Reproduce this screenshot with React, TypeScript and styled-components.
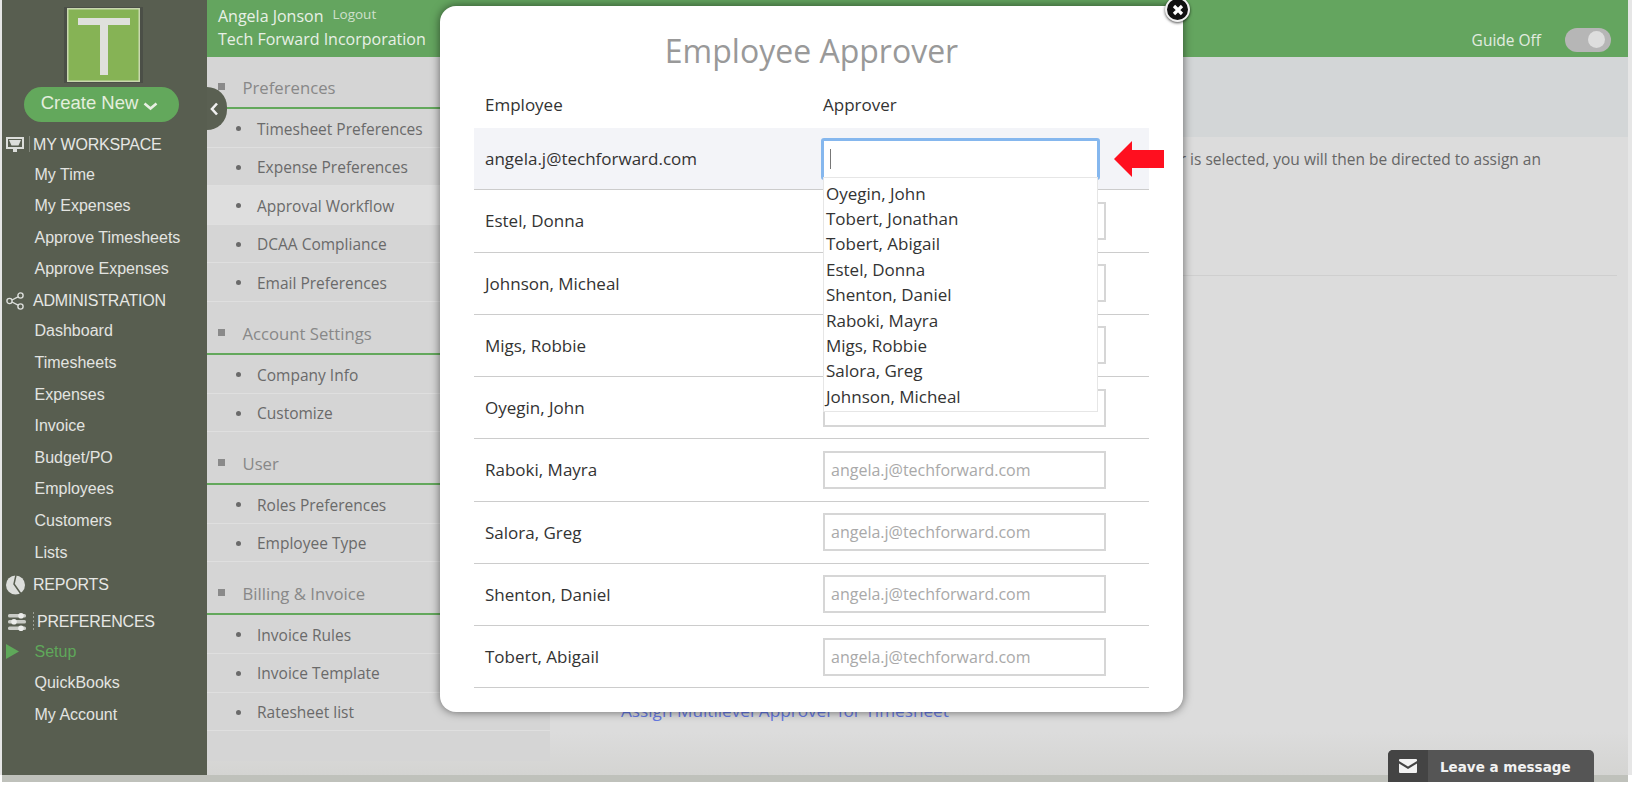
import styled, { createGlobalStyle } from "styled-components";

const GlobalStyle = createGlobalStyle`
    html, body {
        margin: 0;
        padding: 0;
        background: #fff;
        overflow: hidden;
    }
    * { box-sizing: border-box; }
`;

const workspace = ["My Time", "My Expenses", "Approve Timesheets", "Approve Expenses"];
const administration = ["Dashboard", "Timesheets", "Expenses", "Invoice", "Budget/PO", "Employees", "Customers", "Lists"];
const sections = [
    { title: "Preferences", items: ["Timesheet Preferences", "Expense Preferences", "Approval Workflow", "DCAA Compliance", "Email Preferences"] },
    { title: "Account Settings", items: ["Company Info", "Customize"] },
    { title: "User", items: ["Roles Preferences", "Employee Type"] },
    { title: "Billing & Invoice", items: ["Invoice Rules", "Invoice Template", "Ratesheet list"] },
];
const employees = ["Estel, Donna", "Johnson, Micheal", "Migs, Robbie", "Oyegin, John", "Raboki, Mayra", "Salora, Greg", "Shenton, Daniel", "Tobert, Abigail"];
const suggestions = ["Oyegin, John", "Tobert, Jonathan", "Tobert, Abigail", "Estel, Donna", "Shenton, Daniel", "Raboki, Mayra", "Migs, Robbie", "Salora, Greg", "Johnson, Micheal"];

const App = () => {
    return (
        <Page>
            <GlobalStyle />
            <Shell>
                <Sidebar>
                    <LogoBox>
                        <svg width="79" height="76" viewBox="0 0 79 76">
                            <rect width="79" height="76" fill="#4b4f47" />
                            <rect x="3" y="1" width="73" height="74" fill="#c9d8ae" />
                            <rect x="4.5" y="2.5" width="70" height="71" fill="#86b355" />
                            <rect x="14" y="11" width="52" height="7" fill="#dfe0dc" />
                            <rect x="36" y="18" width="8" height="50" fill="#dfe0dc" />
                        </svg>
                    </LogoBox>
                    <CreateButton>
                        Create New
                        <svg width="15" height="9" viewBox="0 0 15 9">
                            <path d="M1.5 1.5 L7.5 6.5 L13.5 1.5" fill="none" stroke="#e8efe3" strokeWidth="2.6" />
                        </svg>
                    </CreateButton>
                    <SideHead>
                        <svg width="24" height="18" viewBox="0 0 24 18">
                            <path d="M0 1h18v12H0z M2 3v8h14V3z" fill="#dcdedb" fillRule="evenodd" />
                            <path d="M3 4h12l-2.5 5.5h-7z" fill="#dcdedb" />
                            <rect x="7" y="13" width="4" height="3" fill="#dcdedb" />
                            <rect x="23" y="0" width="1" height="16" fill="#82877c" />
                        </svg>
                        <span>MY WORKSPACE</span>
                    </SideHead>
                    {workspace.map((item) => <SideLink key={item}>{item}</SideLink>)}
                    <SideHead>
                        <svg width="24" height="18" viewBox="0 0 24 18">
                            <g fill="none" stroke="#dcdedb" strokeWidth="1.4">
                                <circle cx="3.5" cy="9" r="2.6" />
                                <circle cx="14.5" cy="3.5" r="2.6" />
                                <circle cx="14.5" cy="14.5" r="2.6" />
                                <path d="M6 8l6-3.2M6 10l6 3.2" />
                            </g>
                        </svg>
                        <span>ADMINISTRATION</span>
                    </SideHead>
                    {administration.map((item) => <SideLink key={item}>{item}</SideLink>)}
                    <SideHead>
                        <svg width="24" height="20" viewBox="0 0 24 20">
                            <circle cx="9.5" cy="10" r="9.5" fill="#dcdedb" />
                            <path d="M10 0 L8 9 L15 19" fill="none" stroke="#585e50" strokeWidth="1.5" />
                        </svg>
                        <span>REPORTS</span>
                    </SideHead>
                    <PreferencesHead>
                        <svg width="27" height="20" viewBox="0 0 27 20">
                            <g fill="#c9cbc6">
                                <rect x="0" y="2" width="18" height="3.4" rx="1.5" />
                                <rect x="0" y="8" width="18" height="3.4" rx="1.5" />
                                <rect x="0" y="14.5" width="18" height="3.4" rx="1.5" />
                            </g>
                            <g fill="#ecedeb">
                                <circle cx="13" cy="3.7" r="2.8" />
                                <circle cx="6" cy="9.7" r="2.8" />
                                <circle cx="13" cy="16.2" r="2.8" />
                            </g>
                            <path d="M25.5 0v20" stroke="#9a9e94" strokeWidth="1" strokeDasharray="2 2" />
                        </svg>
                        <span>PREFERENCES</span>
                    </PreferencesHead>
                    <SideLink $active>
                        <ActiveMark width="13" height="15" viewBox="0 0 13 15">
                            <path d="M0 0 L13 7.5 L0 15z" fill="#5fa85a" />
                        </ActiveMark>
                        Setup
                    </SideLink>
                    <SideLink>QuickBooks</SideLink>
                    <SideLink>My Account</SideLink>
                </Sidebar>
                <Content>
                    <TopBar>
                        <UserBlock>
                            <UserLine>
                                <span>Angela Jonson</span>
                                <Logout>Logout</Logout>
                            </UserLine>
                            <span>Tech Forward Incorporation</span>
                        </UserBlock>
                        <GuideBlock>
                            <span>Guide Off</span>
                            <Toggle />
                        </GuideBlock>
                    </TopBar>
                    <Body>
                        <SubNav>
                            <CollapseTab>
                                <svg width="9" height="14" viewBox="0 0 9 14">
                                    <path d="M7 1.5 L2 7 L7 12.5" fill="none" stroke="#f0f0f0" strokeWidth="2.6" />
                                </svg>
                            </CollapseTab>
                            {sections.map((section) => (
                                <section key={section.title}>
                                    <NavTitle>{section.title}</NavTitle>
                                    {section.items.map((item) => (
                                        <NavItem key={item} $active={item === "Approval Workflow"}>{item}</NavItem>
                                    ))}
                                </section>
                            ))}
                        </SubNav>
                        <Main>
                            <Band />
                            <Notice>Once an approver is selected, you will then be directed to assign an</Notice>
                            <Divider />
                            <AssignLink>Assign Multilevel Approver for Timesheet</AssignLink>
                        </Main>
                    </Body>
                </Content>
            </Shell>
            <BottomStrip />

            <Modal>
                <CloseButton>
                    <svg width="12" height="12" viewBox="0 0 12 12">
                        <path d="M2 2 L10 10 M10 2 L2 10" stroke="#fff" strokeWidth="3.2" />
                    </svg>
                </CloseButton>
                <ModalTitle>Employee Approver</ModalTitle>
                <TableHead>
                    <span>Employee</span>
                    <span>Approver</span>
                </TableHead>
                <TableRow $highlight>
                    <span>angela.j@techforward.com</span>
                    <FocusWrap>
                        <FocusInput readOnly />
                        <Caret />
                        <Dropdown>
                            {suggestions.map((name) => <Suggestion key={name}>{name}</Suggestion>)}
                        </Dropdown>
                        <RedArrow width="50" height="36" viewBox="0 0 50 36">
                            <path d="M0 18 L18 0 V9 H50 V27 H18 V36z" fill="#ff0f1f" />
                        </RedArrow>
                    </FocusWrap>
                </TableRow>
                {employees.map((name) => (
                    <TableRow key={name}>
                        <span>{name}</span>
                        <ApproverInput readOnly placeholder={name === "Oyegin, John" ? undefined : "angela.j@techforward.com"} />
                    </TableRow>
                ))}
            </Modal>

            <MessageWidget>
                <MessageIcon>
                    <svg width="18" height="14" viewBox="0 0 18 14">
                        <path d="M1 0h16a1 1 0 0 1 1 1v1L9 7.5 0 2V1a1 1 0 0 1 1-1z" fill="#f2f2f2" />
                        <path d="M0 4.4 9 10l9-5.6V13a1 1 0 0 1-1 1H1a1 1 0 0 1-1-1z" fill="#f2f2f2" />
                    </svg>
                </MessageIcon>
                <MessageText>Leave a message</MessageText>
            </MessageWidget>
        </Page>
    );
};

export default App;

const Page = styled.div`
    position: relative;
    width: 1632px;
    height: 788px;
    overflow: hidden;
    background: #fff;
    font-family: "Open Sans", sans-serif;
`;

const Shell = styled.div`
    display: flex;
    height: 775px;
    width: 1632px;
    padding-left: 2px;
    background: #e6e6e6;
`;

const Sidebar = styled.aside`
    width: 205px;
    flex-shrink: 0;
    background: #585e50;
    padding-top: 7px;
    font-family: "Liberation Sans", Arial, sans-serif;
    color: #e3e4e1;
`;

const LogoBox = styled.div`
    display: flex;
    justify-content: center;
    height: 76px;
    margin-right: 2px;
    svg { display: block; }
`;

const CreateButton = styled.div`
    display: flex;
    align-items: center;
    justify-content: center;
    gap: 5px;
    width: 155px;
    height: 35px;
    margin: 4px 0 8.5px 22px;
    padding: 0 4px 4px 0;
    border-radius: 18px;
    background: #63a85c;
    color: #e4eede;
    font-size: 18.5px;
    svg { margin-top: 7px; }
`;

const SideHead = styled.div`
    display: flex;
    align-items: center;
    height: 28.4px;
    margin-top: 2px;
    padding-left: 4px;
    font-size: 16px;
    letter-spacing: -0.2px;
    color: #e6e7e4;
    svg { flex-shrink: 0; margin-right: 3px; }
`;

const PreferencesHead = styled(SideHead)`
    margin-top: 8.6px;
    margin-bottom: 0;
    padding-left: 6px;
    svg { margin-right: 2px; }
`;

const SideLink = styled.div<{ $active?: boolean }>`
    position: relative;
    display: flex;
    align-items: center;
    height: 31.6px;
    padding-left: 32.5px;
    font-size: 16px;
    color: ${(p) => (p.$active ? "#5fa85a" : "#e3e4e1")};
`;

const ActiveMark = styled.svg`
    position: absolute;
    left: 4px;
    top: 8px;
`;

const Content = styled.div`
    width: 1421px;
    flex-shrink: 0;
    display: flex;
    flex-direction: column;
`;

const TopBar = styled.header`
    height: 57px;
    flex-shrink: 0;
    display: flex;
    justify-content: space-between;
    background: #64a55f;
    color: #e8f0e6;
    font-size: 16px;
    padding: 5px 17px 0 11px;
`;

const UserBlock = styled.div`
    display: flex;
    flex-direction: column;
    line-height: 23px;
`;

const UserLine = styled.div`
    display: flex;
    gap: 9px;
`;

const Logout = styled.span`
    font-size: 13.5px;
    color: #cfe0cc;
    margin-top: -2px;
`;

const GuideBlock = styled.div`
    display: flex;
    align-items: center;
    gap: 24px;
    padding-top: 18px;
    font-size: 15.5px;
    color: #e2ece0;
`;

const Toggle = styled.div`
    position: relative;
    width: 46px;
    height: 24px;
    border-radius: 12px;
    background: #b6b6b6;
    &::after {
        content: "";
        position: absolute;
        top: 3px;
        right: 6px;
        width: 17px;
        height: 17px;
        border-radius: 50%;
        background: #dedede;
    }
`;

const Body = styled.div`
    flex: 1;
    display: flex;
    background: linear-gradient(180deg, #dcdcdc 94%, #d4d4d2 100%);
`;

const SubNav = styled.nav`
    position: relative;
    width: 343px;
    height: 704px;
    flex-shrink: 0;
    background: #d5d5d5;
    color: #6a6a6a;
    font-size: 15.5px;
`;

const CollapseTab = styled.div`
    position: absolute;
    left: 0;
    top: 30px;
    width: 20px;
    height: 43px;
    padding-left: 3px;
    display: flex;
    align-items: center;
    border-radius: 0 22px 22px 0;
    background: #5a6052;
    z-index: 1;
`;

const NavTitle = styled.div`
    position: relative;
    display: flex;
    align-items: flex-end;
    height: 53px;
    padding: 0 0 8px 35.5px;
    border-bottom: 2px solid #63a85c;
    font-size: 16.7px;
    color: #888;
    line-height: 22px;
    &::before {
        content: "";
        position: absolute;
        left: 11px;
        bottom: 17px;
        width: 7px;
        height: 7px;
        background: #8a8a8a;
    }
    section:first-of-type > & {
        height: 52px;
    }
`;

const NavItem = styled.div<{ $active?: boolean }>`
    position: relative;
    display: flex;
    align-items: center;
    height: 38.6px;
    padding: 1.5px 0 0 50px;
    border-bottom: 1px solid #dfdfdf;
    background: ${(p) => (p.$active ? "#dedede" : "transparent")};
    &::before {
        content: "";
        position: absolute;
        left: 29px;
        top: 17px;
        width: 5px;
        height: 5px;
        border-radius: 50%;
        background: #6a6a6a;
    }
`;

const Main = styled.main`
    flex: 1;
    display: flex;
    flex-direction: column;
`;

const Band = styled.div`
    height: 80px;
    flex-shrink: 0;
    background: #d3d6d7;
`;

const Notice = styled.p`
    margin: 0;
    padding: 11px 87px 0 0;
    height: 138px;
    text-align: right;
    white-space: nowrap;
    font-size: 15.5px;
    line-height: 22px;
    color: #666;
`;

const Divider = styled.div`
    height: 1px;
    margin: 0 11px 0 71px;
    background: #cfcfcf;
`;

const AssignLink = styled.a`
    margin: 424px 0 0 71px;
    font-size: 17.2px;
    line-height: 22px;
    color: #6478e0;
`;

const BottomStrip = styled.div`
    height: 7px;
    margin-left: 2px;
    width: 1626px;
    background: #bfc1bb;
`;

const Modal = styled.div`
    position: absolute;
    left: 440px;
    top: 6px;
    width: 743px;
    height: 706px;
    padding: 0 34px;
    border-radius: 16px;
    background: #fff;
    box-shadow: 0 0 10px rgba(0, 0, 0, 0.55);
    color: #333;
    font-size: 17px;
`;

const CloseButton = styled.div`
    position: absolute;
    left: 725px;
    top: -9px;
    width: 25px;
    height: 25px;
    display: flex;
    align-items: center;
    justify-content: center;
    border-radius: 50%;
    background: #111;
    border: 2px solid #f2f2f2;
    box-shadow: 0 1px 3px rgba(0, 0, 0, 0.7);
`;

const ModalTitle = styled.h1`
    margin: 0;
    height: 78px;
    padding-top: 22px;
    text-align: center;
    font-weight: 400;
    font-size: 32px;
    line-height: 46px;
    color: #999;
`;

const TableHead = styled.div`
    display: grid;
    grid-template-columns: 338px 1fr;
    height: 44px;
    padding: 9px 0 0 11px;
    line-height: 24px;
`;

const TableRow = styled.div<{ $highlight?: boolean }>`
    display: grid;
    grid-template-columns: 338px 1fr;
    align-items: center;
    height: 62.25px;
    padding-left: 11px;
    border-bottom: 1px solid #ccc;
    background: ${(p) => (p.$highlight ? "#f3f4f8" : "transparent")};
`;

const ApproverInput = styled.input`
    width: 283px;
    height: 38px;
    padding: 0 6px;
    border: 2px solid #d6d6d6;
    outline: none;
    background: #fff;
    font-family: inherit;
    font-size: 16px;
    &::placeholder { color: #a9a9a9; opacity: 1; }
`;

const FocusWrap = styled.div`
    position: relative;
    height: 42px;
    margin-left: -2px;
`;

const FocusInput = styled.input`
    display: block;
    width: 279px;
    height: 42px;
    border: 3px solid #85b7ee;
    border-radius: 3px;
    outline: none;
    background: #fff;
`;

const Caret = styled.div`
    position: absolute;
    left: 9px;
    top: 11px;
    width: 1px;
    height: 20px;
    background: #777;
`;

const Dropdown = styled.div`
    position: absolute;
    left: 2px;
    top: 39px;
    width: 275px;
    height: 235px;
    padding: 3px 0 0 2px;
    border: 1px solid #e6e6e6;
    background: #fff;
    z-index: 2;
`;

const Suggestion = styled.div`
    height: 25.4px;
    line-height: 25.4px;
    color: #333;
`;

const RedArrow = styled.svg`
    position: absolute;
    left: 293px;
    top: 3px;
`;

const MessageWidget = styled.div`
    position: absolute;
    left: 1388px;
    top: 750px;
    width: 206px;
    height: 32px;
    display: flex;
    border-radius: 5px 5px 0 0;
    overflow: hidden;
    background: #555;
`;

const MessageIcon = styled.div`
    width: 40px;
    display: flex;
    align-items: center;
    justify-content: center;
    background: #444;
`;

const MessageText = styled.div`
    padding: 7px 0 0 12px;
    font-family: "DejaVu Sans", sans-serif;
    font-size: 13.5px;
    line-height: 20px;
    font-weight: 700;
    color: #f2f2f2;
`;
